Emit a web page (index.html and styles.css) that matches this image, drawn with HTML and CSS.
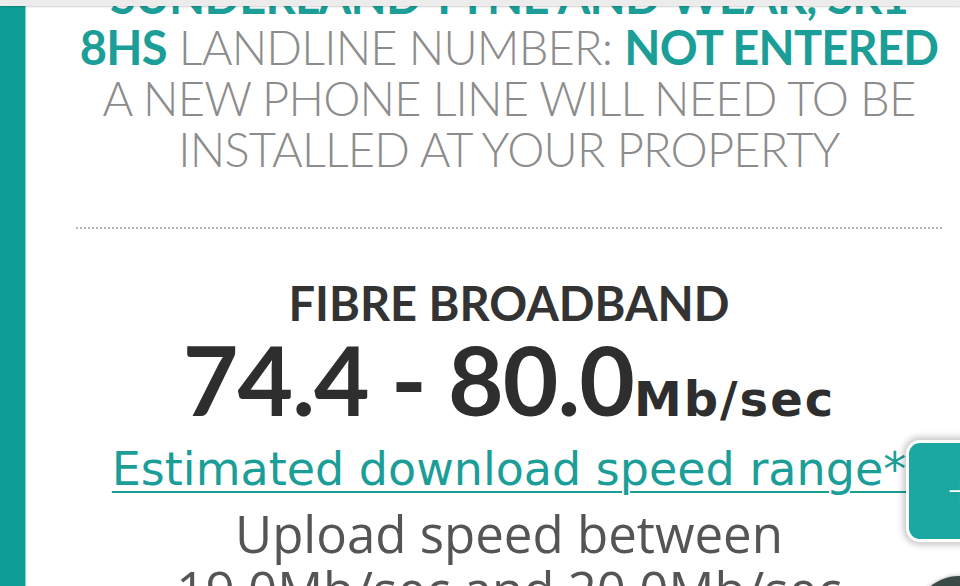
FILE: index.html
```html
<!DOCTYPE html>
<html lang="en">
<head>
<meta charset="utf-8">
<title>Broadband availability</title>
<link rel="stylesheet" href="styles.css">
</head>
<body>
<div class="topbar"></div>
<div class="page">
  <div class="rail"></div>
  <main class="content">
    <section class="address">
      <p class="line"><span class="hl">SUNDERLAND TYNE AND WEAR, SR1</span></p>
      <p class="line"><span class="hl">8HS</span> LANDLINE NUMBER: <span class="hl">NOT ENTERED</span></p>
      <p class="line">A NEW PHONE LINE WILL NEED TO BE</p>
      <p class="line">INSTALLED AT YOUR PROPERTY</p>
    </section>
    <hr class="divider">
    <section class="speed">
      <h2 class="product">FIBRE BROADBAND</h2>
      <p class="range">74.4 - 80.0<span class="unit">Mb/sec</span></p>
      <a class="estimate" href="#">Estimated download speed range*</a>
      <p class="upload">Upload speed between<br>19.0Mb/sec and 20.0Mb/sec</p>
    </section>
  </main>
</div>
<button class="fab" type="button" aria-label="Expand"><span class="plus">+</span></button>
<div class="chat"></div>
</body>
</html>
```
FILE: styles.css
```css
html, body {
  margin: 0;
  padding: 0;
  background: #ffffff;
  overflow: hidden;
  height: 586px;
}

.topbar {
  position: fixed;
  top: 0;
  left: 0;
  right: 0;
  height: 6px;
  background: #ececec;
  box-shadow: 0 1px 2px rgba(0, 0, 0, 0.18);
  z-index: 5;
}

.page {
  display: flex;
  align-items: stretch;
  min-height: 586px;
}

.rail {
  width: 25px;
  flex: none;
  background: #0f9e96;
  box-shadow: 1px 0 0 #7fd3cd;
}

.content {
  width: 866px;
  margin-left: 51px;
  margin-top: -29px;
  font-family: "Lato", "Liberation Sans", sans-serif;
}

.address .line {
  margin: 0;
  font-weight: 300;
  font-size: 47px;
  line-height: 51px;
  letter-spacing: -0.8px;
  text-align: center;
  color: #8c8c8c;
  white-space: nowrap;
}

.address .hl {
  color: #1a9e97;
  font-weight: 700;
}

.divider {
  margin: 52px 0 0;
  border: 0;
  border-top: 2px dotted #b4b4b4;
  height: 0;
}

.speed {
  text-align: center;
}

.product {
  margin: 48px 0 0;
  font-size: 47px;
  line-height: 52px;
  font-weight: 700;
  color: #333333;
}

.range {
  margin: 0;
  font-size: 96px;
  line-height: 100px;
  font-weight: 700;
  color: #2e2e2e;
  letter-spacing: -1px;
}

.range .unit {
  font-family: "DejaVu Sans", "Lato", sans-serif;
  font-size: 48px;
  letter-spacing: 2px;
}

.estimate {
  display: inline-block;
  margin-top: -8px;
  font-family: "DejaVu Sans", "Open Sans", sans-serif;
  font-size: 46px;
  line-height: 56px;
  color: #1a9e97;
  text-decoration: underline;
  text-decoration-thickness: 2px;
  text-underline-offset: 6px;
  white-space: nowrap;
}

.upload {
  margin: 8px 0 0;
  font-family: "Open Sans", "Noto Sans", sans-serif;
  font-size: 51px;
  line-height: 56px;
  color: #555555;
}

.fab {
  position: fixed;
  left: 906px;
  top: 440px;
  width: 80px;
  height: 102px;
  padding: 0;
  border: 3px solid #ffffff;
  border-radius: 14px;
  background: #1ba8a0;
  box-shadow: 0 0 6px 3px rgba(0, 0, 0, 0.22);
  cursor: pointer;
}

.fab .plus {
  position: absolute;
  left: 38px;
  top: 22px;
  color: #ffffff;
  font-family: "Lato", sans-serif;
  font-size: 48px;
  font-weight: 300;
  line-height: 48px;
}

.chat {
  position: fixed;
  left: 914px;
  top: 576px;
  width: 90px;
  height: 90px;
  border-radius: 50%;
  background: #3a4a48;
  box-shadow: 0 0 4px rgba(0, 0, 0, 0.3);
}
```
